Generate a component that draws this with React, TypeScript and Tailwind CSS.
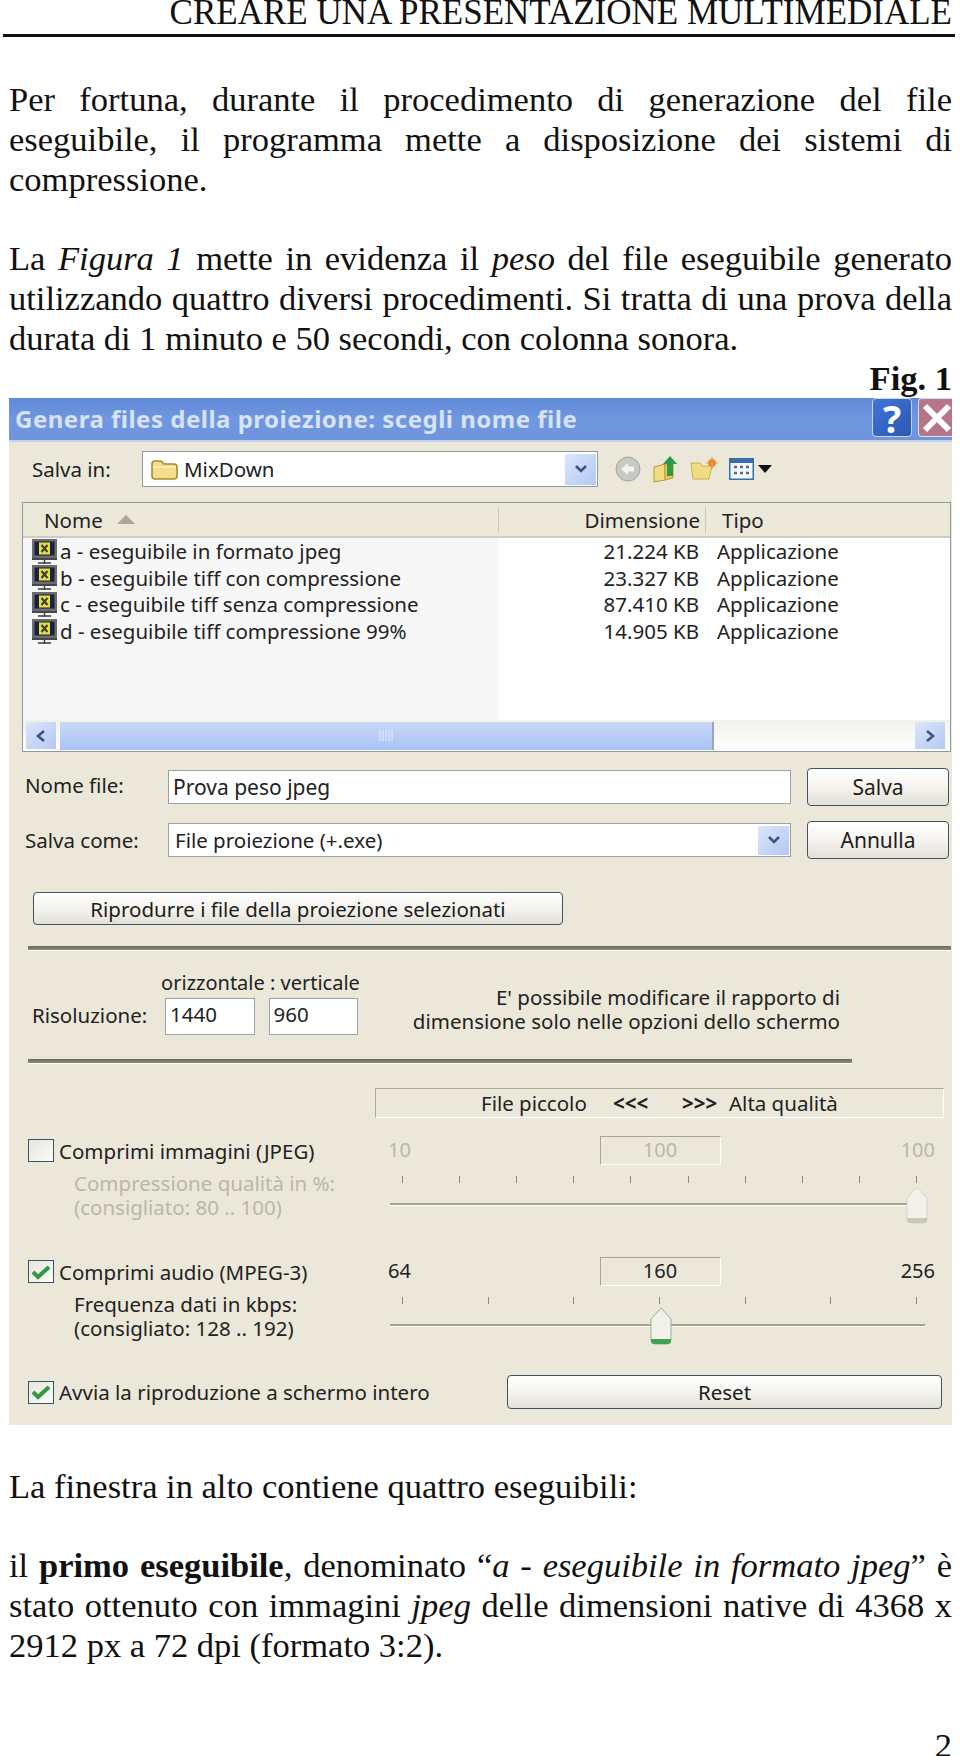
const sansFont = "font-['Noto_Sans','Liberation_Sans',sans-serif]";

const files = [
  { name: 'a - eseguibile in formato jpeg', size: '21.224 KB' },
  { name: 'b - eseguibile tiff con compressione', size: '23.327 KB' },
  { name: 'c - eseguibile tiff senza compressione', size: '87.410 KB' },
  { name: 'd - eseguibile tiff compressione 99%', size: '14.905 KB' },
];

function ExeIcon() {
  return (
    <svg width="25" height="25" viewBox="0 0 25 25" className="shrink-0">
      <rect x="0" y="0" width="25" height="19" fill="#6b6d70" />
      <rect x="2.5" y="2.5" width="20" height="14" fill="#1b2140" />
      <rect x="7" y="3.5" width="11" height="12" fill="#e6df3c" />
      <path d="M9.5 6l6 7M15.5 6l-6 7" stroke="#3a3a2a" strokeWidth="2" />
      <rect x="0" y="19" width="25" height="2" fill="#45474c" />
      <path d="M12.5 21v4M6 24h13" stroke="#3b3d42" strokeWidth="1.4" />
    </svg>
  );
}

function DropArrow({ className }: { className: string }) {
  return (
    <div className={`flex items-center justify-center bg-gradient-to-br from-[#dbe6fb] to-[#b4c8f2] ${className}`}>
      <svg width="14" height="10" viewBox="0 0 14 10">
        <path d="M2 2l5 5 5-5" fill="none" stroke="#3b5488" strokeWidth="2.6" />
      </svg>
    </div>
  );
}

function XpButton({ label, className }: { label: string; className: string }) {
  return (
    <div className={`flex items-center justify-center rounded-[4px] border-[1.5px] border-[#3d5468] bg-gradient-to-b from-white via-[#f4f3ee] to-[#e3e1d6] text-[21px] text-[#1c1c1c] ${className}`}>
      {label}
    </div>
  );
}

function CheckBox({ checked }: { checked: boolean }) {
  return (
    <div className="flex h-[23px] w-[26px] shrink-0 items-center justify-center border-[1.5px] border-[#33566a] bg-gradient-to-br from-[#e6e6de] to-[#fbfbf8]">
      {checked && (
        <svg width="20" height="16" viewBox="0 0 20 16">
          <path d="M2 8l5 5L18 3" fill="none" stroke="#2f9a44" strokeWidth="4" />
        </svg>
      )}
    </div>
  );
}

function Separator({ className }: { className: string }) {
  return <div className={`h-[5px] border-b border-white bg-gradient-to-b from-[#6d6a58] to-[#8f8c78] ${className}`} />;
}

function SliderThumb({ active }: { active: boolean }) {
  return (
    <svg width="22" height="38" viewBox="0 0 22 38">
      <path d="M1 12L11 1l10 11v21q0 4-4 4H5q-4 0-4-4z" fill="#f2f1ea" stroke={active ? '#8fb596' : '#d3d1c5'} strokeWidth="1" />
      <path d="M1 32h20v2q0 3-4 3H5q-4 0-4-3z" fill={active ? '#3fa24f' : '#c9c7ba'} />
    </svg>
  );
}

function CompressRow(props: {
  title: string;
  lines: string[];
  min: string;
  value: string;
  max: string;
  ticks: number;
  position: number;
  checked: boolean;
  enabled: boolean;
  className: string;
}) {
  const tone = props.enabled ? 'text-[#222]' : 'text-[#bab7a9]';
  return (
    <div className={`ml-[19px] flex ${props.className}`}>
      <div className="w-[360px]">
        <div className="mt-[3px] flex h-[23px] items-center gap-[5px]">
          <CheckBox checked={props.checked} />
          <span className="text-[20.5px] text-[#222]">{props.title}</span>
        </div>
        <div className={`mt-[10px] ml-[46px] text-[20.5px] leading-[23.5px] ${tone}`}>
          {props.lines.map((l) => (
            <div key={l}>{l}</div>
          ))}
        </div>
      </div>
      <div className="-mt-[6px] w-[547px]">
        <div className={`grid h-[29px] grid-cols-[1fr_118px_1fr] items-center text-[20px] ${tone}`}>
          <span>{props.min}</span>
          <div className="-ml-[3px] flex h-[29px] items-center justify-center border border-t-[#a8a592] border-l-[#a8a592] border-r-white border-b-white">
            {props.value}
          </div>
          <span className="text-right">{props.max}</span>
        </div>
        <div className="mt-[17px] ml-[14px] flex w-[515px] justify-between">
          {Array.from({ length: props.ticks }).map((_, i) => (
            <div key={i} className="h-[7px] w-[1px] bg-[#8d8a78]" />
          ))}
        </div>
        <div className="relative mt-[20px] ml-[2px] h-[3px] w-[535px] border-b border-white bg-[#a5a28f]">
          <div className="absolute top-[-17px] -ml-[11px]" style={{ left: `${12 + props.position * 515}px` }}>
            <SliderThumb active={props.enabled} />
          </div>
        </div>
      </div>
    </div>
  );
}

function Dialog() {
  return (
    <div className={`ml-[9px] w-[943px] ${sansFont} text-[#222]`}>
      <div className="flex h-[44px] items-center justify-between border-b-2 border-[#c6d1ee] bg-gradient-to-b from-[#5f8ad8] via-[#7097e0] to-[#6f94dc]">
        <span className="ml-[6px] text-[24px] font-bold tracking-[0.5px] text-[#d8e3f5]">
          Genera files della proiezione: scegli nome file
        </span>
        <div className="flex items-center gap-[6px] self-start">
          <div className="flex h-[39px] w-[40px] items-center justify-center rounded-[4px] border border-[#c9d7f2] bg-gradient-to-br from-[#3f75d9] to-[#2b58b4] text-[38px] font-bold text-white">
            ?
          </div>
          <div className="flex h-[39px] w-[34px] items-center justify-center rounded-l-[4px] border border-r-0 border-[#d5e0f4] bg-[#b6758a]">
            <svg width="32" height="30" viewBox="0 0 32 30">
              <path d="M5 3l24 24M29 3L5 27" stroke="#fff" strokeWidth="6" />
            </svg>
          </div>
        </div>
      </div>

      <div className="h-[983px] bg-[#ebe8d9] pt-[9px]">
        {/* barra Salva in */}
        <div className="flex h-[36px] items-center">
          <span className="ml-[23px] w-[110px] text-[20.5px]">Salva in:</span>
          <div className="flex h-[36px] w-[456px] items-center border-[1.5px] border-[#8c9aa6] bg-white">
            <svg width="28" height="22" viewBox="0 0 28 22" className="ml-[7px]">
              <path d="M2 6q0-3 3-3h6l3 3h10q3 0 3 3v9q0 3-3 3H5q-3 0-3-3z" fill="#f6dd8a" stroke="#a98a2e" strokeWidth="1.6" />
              <path d="M3 9h23" stroke="#fff3c4" strokeWidth="1.6" />
            </svg>
            <span className="ml-[6px] text-[20.5px]">MixDown</span>
            <div className="flex-1" />
            <DropArrow className="mr-[1px] h-[31px] w-[31px]" />
          </div>
          <div className="ml-[17px] flex items-center">
            <svg width="26" height="26" viewBox="0 0 26 26">
              <circle cx="13" cy="13" r="12" fill="#c9c9c4" stroke="#a4a4a0" />
              <path d="M6 13l7-6v3.5h6v5h-6V19z" fill="#f4f4f2" />
            </svg>
            <svg width="26" height="28" viewBox="0 0 26 28" className="ml-[12px]">
              <path d="M1 12l11-3v16l-11 2z" fill="#f2dc82" stroke="#b59a36" />
              <path d="M12 9h8v14l-8 2z" fill="#e6c95e" stroke="#b59a36" />
              <path d="M17 1l7 8h-4v12h-6V9h-4z" fill="#2f9a44" />
            </svg>
            <svg width="28" height="24" viewBox="0 0 28 24" className="ml-[11px]">
              <path d="M1 6h9l2 3h10l-3 13H3z" fill="#f2dc82" stroke="#c9ae4e" />
              <circle cx="22" cy="6" r="4" fill="#e8873a" />
              <path d="M22 0v12M16 6h12" stroke="#e8a03a" strokeWidth="1.2" />
            </svg>
            <svg width="25" height="22" viewBox="0 0 25 22" className="ml-[11px]">
              <rect x="0.75" y="0.75" width="23.5" height="20.5" fill="#f3f6fb" stroke="#3b6ea8" strokeWidth="1.5" />
              <rect x="1" y="1" width="23" height="4" fill="#3b6ea8" />
              <path d="M5 9h3M11 9h3M17 9h3M5 15h3M11 15h3M17 15h3" stroke="#5b6b7a" strokeWidth="2.5" />
            </svg>
            <svg width="14" height="8" viewBox="0 0 14 8" className="ml-[4px]">
              <path d="M0 0h14L7 8z" fill="#111" />
            </svg>
          </div>
        </div>

        {/* elenco file */}
        <div className="mt-[15px] ml-[13px] flex h-[250px] w-[929px] flex-col border-[1.5px] border-[#8c9aa6] bg-white">
          <div className="flex h-[35px] shrink-0 items-center border-b-[2px] border-[#cfccbd] bg-[#ebe8d9] text-[20.5px]">
            <div className="flex h-[26px] w-[476px] items-center gap-[14px] border-r border-[#c9c6b6] pl-[21px]">
              Nome
              <svg width="18" height="9" viewBox="0 0 18 9">
                <path d="M0 9L9 0l9 9z" fill="#aca899" />
              </svg>
            </div>
            <div className="flex h-[26px] w-[207px] items-center justify-end border-r border-[#c9c6b6] pr-[5px]">Dimensione</div>
            <div className="pl-[16px]">Tipo</div>
          </div>
          <div className="flex flex-1 text-[20.5px] leading-[26.6px]">
            <div className="w-[476px] bg-[#f7f7f7] pl-[9px]">
              {files.map((f) => (
                <div key={f.name} className="flex h-[26.6px] items-center gap-[3px]">
                  <ExeIcon />
                  <span>{f.name}</span>
                </div>
              ))}
            </div>
            <div className="w-[200px] text-right">
              {files.map((f) => (
                <div key={f.size}>{f.size}</div>
              ))}
            </div>
            <div className="pl-[18px]">
              {files.map((f) => (
                <div key={f.size}>Applicazione</div>
              ))}
            </div>
          </div>
          <div className="flex h-[31px] shrink-0 items-center bg-gradient-to-b from-[#f2f1ea] to-white pl-[3px]">
            <div className="flex h-[27px] w-[30px] items-center justify-center bg-gradient-to-br from-[#dbe6fb] to-[#b4c8f2]">
              <svg width="12" height="14" viewBox="0 0 12 14">
                <path d="M9 2L3 7l6 5" fill="none" stroke="#3b5488" strokeWidth="2.6" />
              </svg>
            </div>
            <div className="ml-[4px] flex h-[28px] w-[654px] items-center justify-center border-r-[2px] border-[#9aa6b2] bg-gradient-to-b from-[#c8d8fa] to-[#a9c2f4]">
              <svg width="14" height="11" viewBox="0 0 14 11">
                <path d="M1 0v11M4 0v11M7 0v11M10 0v11M13 0v11" stroke="#e9effb" />
              </svg>
            </div>
            <div className="flex-1" />
            <div className="mr-[5px] flex h-[27px] w-[30px] items-center justify-center bg-gradient-to-br from-[#dbe6fb] to-[#b4c8f2]">
              <svg width="12" height="14" viewBox="0 0 12 14">
                <path d="M3 2l6 5-6 5" fill="none" stroke="#3b5488" strokeWidth="2.6" />
              </svg>
            </div>
          </div>
        </div>

        {/* nome file */}
        <div className="mt-[16px] ml-[16px] flex h-[38px] items-center">
          <span className="w-[143px] -translate-y-[2px] text-[20.5px]">Nome file:</span>
          <div className="flex h-[34px] w-[623px] items-center border-[1.5px] border-[#9aa4a6] bg-white pl-[4px] text-[21px]">
            Prova peso jpeg
          </div>
          <XpButton label="Salva" className="ml-[16px] h-[38px] w-[142px]" />
        </div>
        <div className="mt-[15px] ml-[16px] flex h-[38px] items-center">
          <span className="w-[143px] text-[20.5px]">Salva come:</span>
          <div className="flex h-[34px] w-[623px] items-center border-[1.5px] border-[#9aa4a6] bg-white pl-[6px] text-[20.5px]">
            File proiezione (+.exe)
            <div className="flex-1" />
            <DropArrow className="mr-[1px] h-[29px] w-[31px]" />
          </div>
          <XpButton label="Annulla" className="ml-[16px] h-[38px] w-[142px]" />
        </div>

        <XpButton label="Riprodurre i file della proiezione selezionati" className="mt-[33px] ml-[24px] h-[33px] w-[530px] !text-[20.5px]" />
        <Separator className="mt-[21px] ml-[19px] w-[923px]" />

        {/* risoluzione */}
        <div className="mt-[20px] ml-[23px] flex h-[66px] text-[20.5px]">
          <span className="mt-[24px] w-[133px]">Risoluzione:</span>
          <div className="w-[193px]">
            <div className="-mx-[10px] -translate-x-[1px] h-[27px] whitespace-nowrap text-center text-[20px] leading-[24px]">orizzontale : verticale</div>
            <div className="flex gap-[14px]">
              <div className="h-[37px] w-[90px] border-[1.5px] border-[#9aa4a6] bg-white pl-[4px] leading-[30px]">1440</div>
              <div className="h-[37px] w-[90px] border-[1.5px] border-[#9aa4a6] bg-white pl-[4px] leading-[30px]">960</div>
            </div>
          </div>
          <div className="w-[482px] pt-[14px] text-right leading-[24px]">
            <div>E' possibile modificare il rapporto di</div>
            <div>dimensione solo nelle opzioni dello schermo</div>
          </div>
        </div>
        <Separator className="mt-[22px] ml-[19px] w-[824px]" />

        {/* qualita */}
        <div className="mt-[24px] ml-[366px] flex h-[30px] w-[569px] items-center border border-t-[#aca899] border-l-[#aca899] border-r-white border-b-white pl-[105px] text-[20.5px]">
          <span className="w-[132px]">File piccolo</span>
          <span className="w-[69px] font-bold">{'<<<'}</span>
          <span className="w-[47px] font-bold">{'>>>'}</span>
          <span>Alta qualità</span>
        </div>

        <CompressRow
          className="mt-[18px] h-[121px]"
          title="Comprimi immagini (JPEG)"
          lines={['Compressione qualità in %:', '(consigliato: 80 .. 100)']}
          min="10"
          value="100"
          max="100"
          ticks={10}
          position={1}
          checked={false}
          enabled={false}
        />
        <CompressRow
          className="h-[118px]"
          title="Comprimi audio (MPEG-3)"
          lines={['Frequenza dati in kbps:', '(consigliato: 128 .. 192)']}
          min="64"
          value="160"
          max="256"
          ticks={7}
          position={0.502}
          checked={true}
          enabled={true}
        />

        <div className="ml-[19px] flex h-[34px] items-center">
          <div className="flex w-[479px] items-center gap-[5px] text-[20.5px]">
            <CheckBox checked={true} />
            Avvia la riproduzione a schermo intero
          </div>
          <XpButton label="Reset" className="h-[34px] w-[435px] !text-[20.5px]" />
        </div>
      </div>
    </div>
  );
}

export default function App() {
  return (
    <div className="h-[1756px] w-[960px] overflow-hidden bg-white font-['Liberation_Serif','Times_New_Roman',serif] text-[34.5px] leading-[40px] text-[#111]">
      <div className="h-[34px] pr-[8px] text-right text-[35px] leading-[26px] whitespace-nowrap">CREARE UNA PRESENTAZIONE MULTIMEDIALE</div>
      <div className="ml-[3px] h-[3px] w-[952px] bg-[#111]" />

      <div className="mt-[42px] ml-[9px] w-[943px]">
        <p className="text-justify">
          Per fortuna, durante il procedimento di generazione del file eseguibile, il programma mette a disposizione dei sistemi di compressione.
        </p>
        <p className="mt-[39px] text-justify">
          La <em>Figura 1</em> mette in evidenza il <em>peso</em> del file eseguibile generato utilizzando quattro diversi procedimenti. Si tratta di una prova della durata di 1 minuto e 50 secondi, con colonna sonora.
        </p>
        <p className="h-[40px] text-right font-bold">Fig. 1</p>
      </div>

      <Dialog />

      <div className="ml-[9px] w-[943px]">
        <p className="mt-[41px]">La finestra in alto contiene quattro eseguibili:</p>
        <p className="mt-[39px] text-justify">
          il <strong>primo eseguibile</strong>, denominato “<em>a - eseguibile in formato jpeg</em>” è stato ottenuto con immagini <em>jpeg</em> delle dimensioni native di 4368 x 2912 px a 72 dpi (formato 3:2).
        </p>
        <p className="mt-[60px] text-right">2</p>
      </div>
    </div>
  );
}
